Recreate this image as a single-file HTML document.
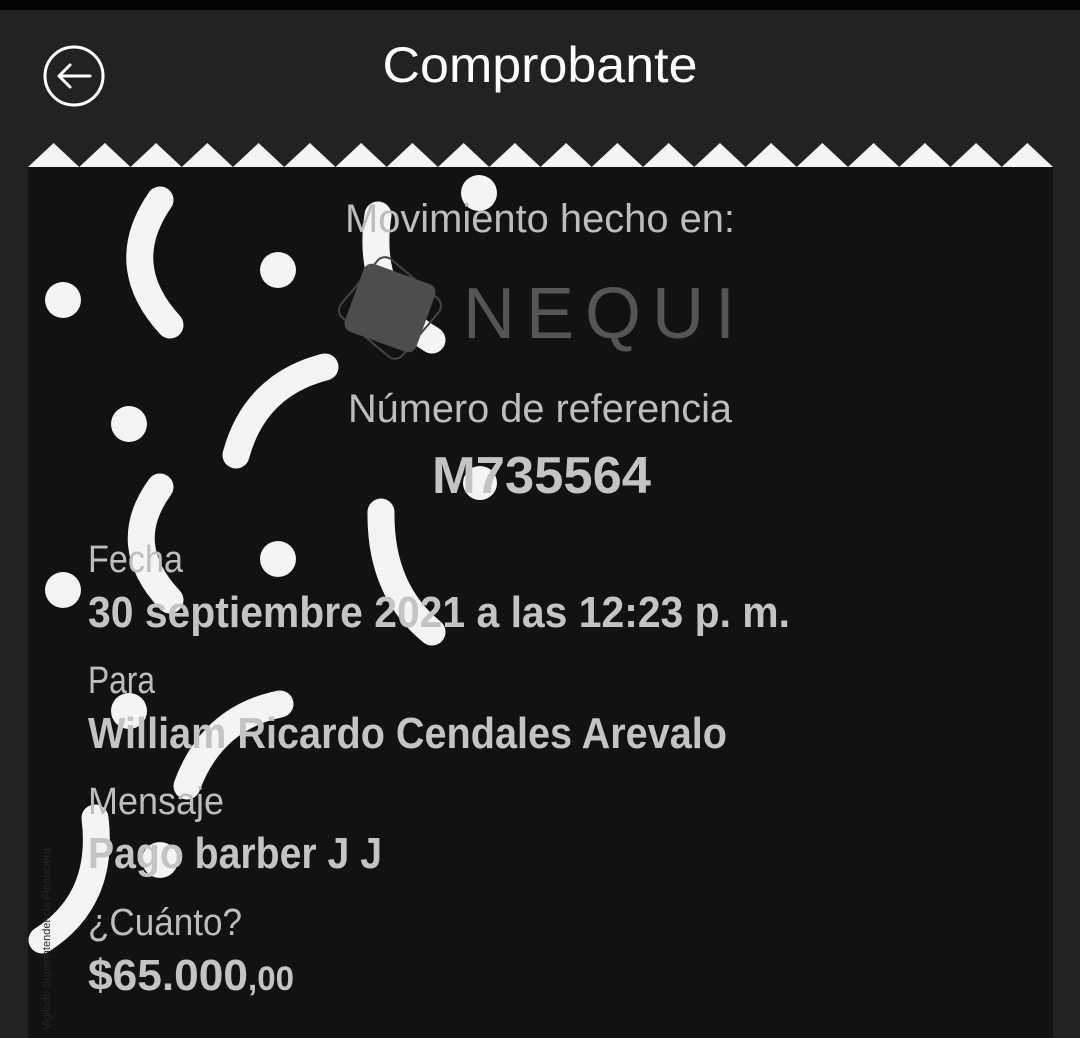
<!DOCTYPE html>
<html><head><meta charset="utf-8"><style>
html,body{margin:0;padding:0;background:#222;}
svg{display:block}
</style></head><body>
<svg width="1080" height="1038" viewBox="0 0 1080 1038" xmlns="http://www.w3.org/2000/svg" font-family="Liberation Sans, sans-serif">
<rect x="0" y="0" width="1080" height="1038" fill="#222"/>
<rect x="0" y="0" width="1080" height="10" fill="#050505"/>
<rect x="28" y="167" width="1025" height="871" fill="#121212"/>
<g fill="#f4f4f4">
<polygon points="28,167 53.6,143 79.2,167"/><polygon points="79.2,167 104.9,143 130.5,167"/><polygon points="130.5,167 156.1,143 181.7,167"/><polygon points="181.7,167 207.4,143 233,167"/><polygon points="233,167 258.6,143 284.2,167"/><polygon points="284.2,167 309.9,143 335.5,167"/><polygon points="335.5,167 361.1,143 386.7,167"/><polygon points="386.7,167 412.4,143 438,167"/><polygon points="438,167 463.6,143 489.2,167"/><polygon points="489.2,167 514.9,143 540.5,167"/><polygon points="540.5,167 566.1,143 591.7,167"/><polygon points="591.7,167 617.4,143 643,167"/><polygon points="643,167 668.6,143 694.2,167"/><polygon points="694.2,167 719.9,143 745.5,167"/><polygon points="745.5,167 771.1,143 796.7,167"/><polygon points="796.7,167 822.4,143 848,167"/><polygon points="848,167 873.6,143 899.2,167"/><polygon points="899.2,167 924.9,143 950.5,167"/><polygon points="950.5,167 976.1,143 1001.7,167"/><polygon points="1001.7,167 1027.4,143 1053,167"/>
</g>
<circle cx="74" cy="76" r="29" fill="none" stroke="#fff" stroke-width="3"/>
<path d="M59 76 H90 M70 65 L59 76 L70 87" fill="none" stroke="#fff" stroke-width="3" stroke-linecap="round" stroke-linejoin="round"/>
<text x="540" y="82" text-anchor="middle" font-size="50" fill="#fff" textLength="315" lengthAdjust="spacingAndGlyphs">Comprobante</text>
<g fill="#f4f4f4">
<circle cx="63" cy="300" r="18"/><circle cx="278" cy="270" r="18"/><circle cx="479" cy="193" r="18"/>
<circle cx="129" cy="424" r="18"/><circle cx="480" cy="483" r="17"/><circle cx="278" cy="559" r="18"/>
<circle cx="63" cy="590" r="18"/><circle cx="129" cy="711" r="18"/><circle cx="160" cy="860" r="18"/>
</g>
<g fill="none" stroke="#f4f4f4" stroke-width="27" stroke-linecap="round">
<path d="M160 200 Q115 265 170 325"/>
<path d="M378 215 Q365 300 432 340"/>
<path d="M236 455 Q255 385 325 367"/>
<path d="M160 487 Q118 545 170 600"/>
<path d="M381 512 Q380 590 432 632"/>
<path d="M187 786 Q212 718 280 704"/>
<path d="M95 818 Q105 900 42 940"/>
</g>
<g transform="translate(390 308) rotate(20)">
<rect x="-40" y="-38" width="80" height="76" rx="10" fill="none" stroke="#444" stroke-width="2" transform="rotate(20)"/>
<rect x="-38" y="-36" width="76" height="72" rx="9" fill="#4d4d4d"/>
</g>
<text x="463" y="338" font-size="72" fill="#555" textLength="272" lengthAdjust="spacing">NEQUI</text>
<g fill="#bdbdbd">
<text x="345" y="232" font-size="40" textLength="390" lengthAdjust="spacingAndGlyphs">Movimiento hecho en:</text>
<text x="348" y="422" font-size="40" textLength="384" lengthAdjust="spacingAndGlyphs">Número de referencia</text>
<text x="88" y="572" font-size="38" textLength="95" lengthAdjust="spacingAndGlyphs">Fecha</text>
<text x="88" y="693" font-size="38" textLength="67" lengthAdjust="spacingAndGlyphs">Para</text>
<text x="88" y="814" font-size="38" textLength="136" lengthAdjust="spacingAndGlyphs">Mensaje</text>
<text x="88" y="935" font-size="38" textLength="154" lengthAdjust="spacingAndGlyphs">¿Cuánto?</text>
</g>
<g fill="#c4c4c4" font-weight="bold">
<text x="432" y="493" font-size="52" textLength="219" lengthAdjust="spacingAndGlyphs">M735564</text>
<text x="88" y="627" font-size="44" textLength="702" lengthAdjust="spacingAndGlyphs">30 septiembre 2021 a las 12:23 p. m.</text>
<text x="88" y="748" font-size="44" textLength="639" lengthAdjust="spacingAndGlyphs">William Ricardo Cendales Arevalo</text>
<text x="88" y="868" font-size="44" textLength="294" lengthAdjust="spacingAndGlyphs">Pago barber J J</text>
<text x="88" y="990" font-size="44" textLength="160" lengthAdjust="spacingAndGlyphs">$65.000</text>
<text x="248" y="990" font-size="34" textLength="46" lengthAdjust="spacingAndGlyphs">,00</text>
</g>
<text transform="translate(50 1030) rotate(-90)" font-size="11" fill="#262626">Vigilado Superintendencia Financiera</text>
</svg>
</body></html>
